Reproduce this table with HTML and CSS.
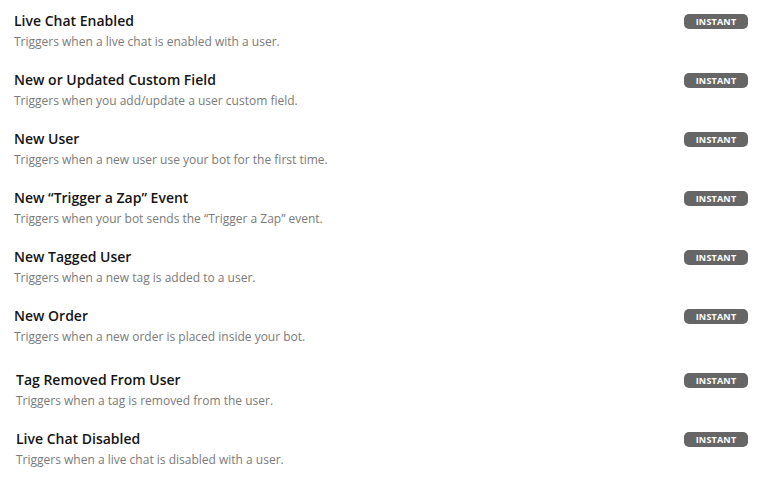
FILE: index.html
```html
<!DOCTYPE html>
<html>
<head>
<meta charset="utf-8">
<link rel="stylesheet" href="styles.css">
</head>
<body>
<div class="list">
  <div class="item">
    <div class="text"><div class="title">Live Chat Enabled</div><div class="desc">Triggers when a live chat is enabled with a user.</div></div>
    <span class="badge">INSTANT</span>
  </div>
  <div class="item">
    <div class="text"><div class="title">New or Updated Custom Field</div><div class="desc">Triggers when you add/update a user custom field.</div></div>
    <span class="badge">INSTANT</span>
  </div>
  <div class="item">
    <div class="text"><div class="title">New User</div><div class="desc">Triggers when a new user use your bot for the first time.</div></div>
    <span class="badge">INSTANT</span>
  </div>
  <div class="item">
    <div class="text"><div class="title">New “Trigger a Zap” Event</div><div class="desc">Triggers when your bot sends the “Trigger a Zap” event.</div></div>
    <span class="badge">INSTANT</span>
  </div>
  <div class="item">
    <div class="text"><div class="title">New Tagged User</div><div class="desc">Triggers when a new tag is added to a user.</div></div>
    <span class="badge">INSTANT</span>
  </div>
  <div class="item">
    <div class="text"><div class="title">New Order</div><div class="desc">Triggers when a new order is placed inside your bot.</div></div>
    <span class="badge">INSTANT</span>
  </div>
</div>
<div class="list list-extra">
  <div class="item">
    <div class="text"><div class="title">Tag Removed From User</div><div class="desc">Triggers when a tag is removed from the user.</div></div>
    <span class="badge">INSTANT</span>
  </div>
  <div class="item">
    <div class="text"><div class="title">Live Chat Disabled</div><div class="desc">Triggers when a live chat is disabled with a user.</div></div>
    <span class="badge">INSTANT</span>
  </div>
</div>
</body>
</html>
```
FILE: styles.css
```css
html, body {
  margin: 0;
  padding: 0;
  background: #ffffff;
  font-family: "Open Sans", "DejaVu Sans", sans-serif;
}
.list {
  display: flex;
  flex-direction: column;
  padding: 11px 15px 0 14px;
}
.list-extra {
  padding-top: 5px;
  padding-left: 16px;
}
.item {
  display: flex;
  justify-content: space-between;
  align-items: flex-start;
  height: 59px;
}
.title {
  font-size: 14px;
  font-weight: 600;
  color: #151515;
  line-height: 20px;
}
.desc {
  margin-top: 1px;
  font-size: 12px;
  color: #7a7a7a;
  line-height: 20px;
}
.badge {
  margin-top: 3px;
  width: 64px;
  height: 15px;
  border-radius: 5px;
  background: #666666;
  color: #ffffff;
  font-size: 9px;
  font-weight: 700;
  line-height: 15px;
  text-align: center;
  letter-spacing: 0.2px;
}
```
